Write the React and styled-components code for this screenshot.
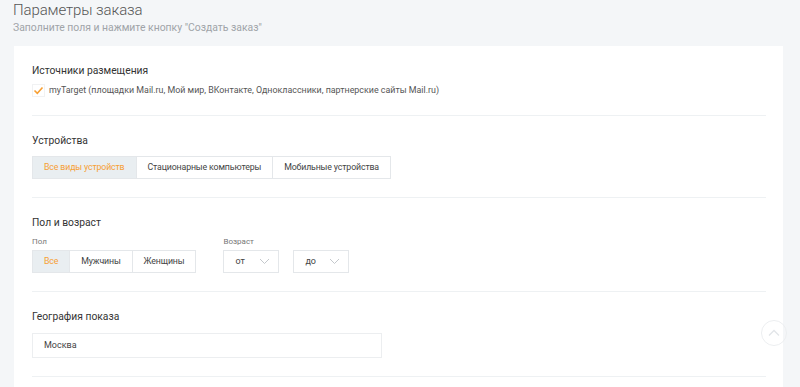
import React from 'react'
import styled, { createGlobalStyle } from 'styled-components'

const GlobalStyle = createGlobalStyle`
    body {
        margin: 0;
        background: #f4f6f8;
        font-family: Roboto, "Noto Sans", sans-serif;
        color: #333;
    }
`

function ButtonGroup({ items, active }) {
    return (
        <Group>
            {items.map((label, i) => (
                <GroupBtn key={label} active={i === active}>{label}</GroupBtn>
            ))}
        </Group>
    )
}

function Select({ value }) {
    return (
        <SelectBox>
            {value}
            <svg width="11" height="7" viewBox="0 0 11 7">
                <path d="M1 1l4.5 4.5L10 1" fill="none" stroke="#c4c8cc" strokeWidth="1" />
            </svg>
        </SelectBox>
    )
}

function App() {
    return (
        <Page>
            <GlobalStyle />
            <Header>
                <Title>Параметры заказа</Title>
                <Subtitle>Заполните поля и нажмите кнопку "Создать заказ"</Subtitle>
            </Header>

            <Card>
                <Section>
                    <SectionTitle>Источники размещения</SectionTitle>
                    <CheckRow>
                        <CheckBox>
                            <svg width="11" height="9" viewBox="0 0 11 9">
                                <path d="M1.5 4.5l2.8 2.8L9.5 1.5" fill="none" stroke="#f7a035" strokeWidth="1.6" />
                            </svg>
                        </CheckBox>
                        myTarget (площадки Mail.ru, Мой мир, ВКонтакте, Одноклассники, партнерские сайты Mail.ru)
                    </CheckRow>
                </Section>

                <Section>
                    <SectionTitle>Устройства</SectionTitle>
                    <ButtonGroup
                        items={['Все виды устройств', 'Стационарные компьютеры', 'Мобильные устройства']}
                        active={0}
                    />
                </Section>

                <Section>
                    <SectionTitle>Пол и возраст</SectionTitle>
                    <FieldRow>
                        <Field>
                            <FieldLabel>Пол</FieldLabel>
                            <ButtonGroup items={['Все', 'Мужчины', 'Женщины']} active={0} />
                        </Field>
                        <Field>
                            <FieldLabel>Возраст</FieldLabel>
                            <Selects>
                                <Select value="от" />
                                <Select value="до" />
                            </Selects>
                        </Field>
                    </FieldRow>
                </Section>

                <Section>
                    <SectionTitle>География показа</SectionTitle>
                    <Input>Москва</Input>
                </Section>

                <Section />
            </Card>

            <ScrollTop>
                <svg width="12" height="8" viewBox="0 0 12 8">
                    <path d="M1 6.5l5-5 5 5" fill="none" stroke="#e2e5e8" strokeWidth="1.3" />
                </svg>
            </ScrollTop>
        </Page>
    )
}

export default App


const Page = styled.div`
    width: 800px;
    height: 387px;
    overflow: hidden;
    padding: 0 17px 0 13px;
    box-sizing: border-box;
`

const Header = styled.div`
    height: 46px;
`

const Title = styled.div`
    font-size: 15px;
    letter-spacing: -0.1px;
    line-height: 20px;
    font-weight: 300;
    color: #555;
`

const Subtitle = styled.div`
    font-size: 10.4px;
    line-height: 15px;
    color: #a0a4a8;
`

const Card = styled.div`
    margin-left: 1px;
    background: #fff;
    padding: 0 17px 0 18px;
    min-height: 400px;
`

const Section = styled.div`
    padding: 17px 0 18px;
    border-bottom: 1px solid #eef1f3;
    &:last-child {
        border-bottom: none;
    }
`

const SectionTitle = styled.div`
    font-size: 10.3px;
    line-height: 15px;
    color: #333;
    margin-bottom: 7px;
`

const CheckRow = styled.div`
    display: flex;
    align-items: center;
    gap: 4px;
    font-size: 8.9px;
    line-height: 13px;
    color: #555;
    margin-top: -1px;
`

const CheckBox = styled.span`
    width: 13px;
    height: 13px;
    box-sizing: border-box;
    border: 1px solid #f1f2f3;
    display: flex;
    align-items: center;
    justify-content: center;
`

const Group = styled.div`
    display: inline-flex;
`

const GroupBtn = styled.div`
    height: 23px;
    box-sizing: border-box;
    padding: 0 11px;
    display: flex;
    align-items: center;
    font-size: 8.8px;
    letter-spacing: -0.15px;
    color: ${p => (p.active ? '#f7a035' : '#444')};
    background: ${p => (p.active ? '#e9eef1' : '#fff')};
    border: 1px solid #e4e7ea;
    margin-left: -1px;
    &:first-child {
        margin-left: 0;
    }
`

const FieldRow = styled.div`
    display: flex;
    gap: 27px;
    margin-top: -1px;
`

const Field = styled.div`
    display: flex;
    flex-direction: column;
`

const FieldLabel = styled.div`
    font-size: 8px;
    line-height: 12px;
    color: #777;
    margin-bottom: 2px;
`

const Selects = styled.div`
    display: flex;
    gap: 14px;
`

const SelectBox = styled.div`
    width: 56px;
    height: 23px;
    box-sizing: border-box;
    border: 1px solid #e4e7ea;
    display: flex;
    align-items: center;
    justify-content: space-between;
    padding: 0 8px 0 11px;
    font-size: 9px;
    color: #444;
`

const Input = styled.div`
    width: 350px;
    height: 25px;
    margin-top: 9px;
    box-sizing: border-box;
    border: 1px solid #eceef0;
    display: flex;
    align-items: center;
    padding: 0 11px;
    font-size: 9px;
    color: #444;
`

const ScrollTop = styled.div`
    position: fixed;
    right: 13px;
    bottom: 41px;
    width: 26px;
    height: 26px;
    box-sizing: border-box;
    border-radius: 50%;
    border: 1px solid #eceef0;
    display: flex;
    align-items: center;
    justify-content: center;
`
